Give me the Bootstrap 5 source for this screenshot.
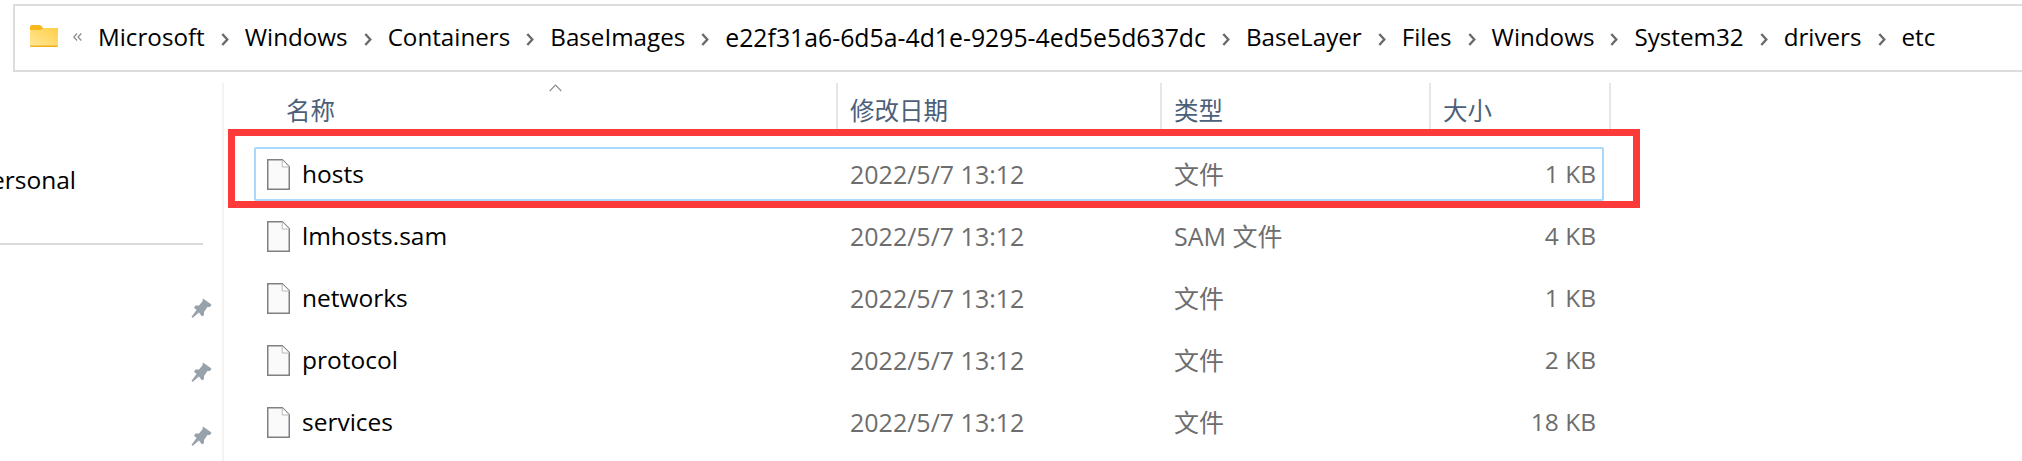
<!DOCTYPE html>
<html lang="zh">
<head>
<meta charset="utf-8">
<title>etc</title>
<link href="https://cdn.jsdelivr.net/npm/bootstrap@5.3.0/dist/css/bootstrap.min.css" rel="stylesheet">
<style>
html,body{height:461px;overflow:hidden;background:#fff}
body{font-family:"Open Sans","Noto Sans CJK SC",sans-serif;font-size:25px;color:#000}
.addr{margin:4px 0 0 13px;height:68px;border:2px solid #dcdcdc;border-right:0;padding-left:15px;padding-bottom:2px}
.addr .ic-folder{width:28px;height:22px;margin-top:-2px}
.addr .ic-back{width:9px;height:8px;margin-left:15px;margin-right:16px}
.crumb{white-space:nowrap;line-height:1;font-size:24.2px}
.crumb-long{font-size:24.8px}
.sep{width:8px;height:13px;margin:4px 16px 0}
.main{margin-top:11px}
.side{width:224px;height:378px;border-right:2px solid #f3f3f3;padding-top:79px;overflow:hidden}
.side-label{line-height:36px;height:36px;margin-left:-9px;font-size:24.500px}
.side-line{height:2px;background:#d9d9d9;width:203px;margin-top:45px;margin-bottom:53px}
.pins{gap:44px;padding-right:10px}
.pin{width:21px;height:20px}
.cols{height:46px;position:relative}
.hcol{color:#4c607a;font-size:24.500px;font-family:"Noto Sans CJK SC","Open Sans",sans-serif;border-right:2px solid #e6e6e6;padding-left:12px;padding-top:10px;line-height:34px;height:46px}
.c-name{width:614px;padding-left:62px}
.c-date{width:324px}
.c-type{width:269px}
.c-size{width:180px}
.caret{position:absolute;left:325px;top:1px;width:13px;height:8px}
.rows{margin:18px 0 0 30px;gap:8px}
.frow{width:1350px;height:54px;border:2px solid transparent;line-height:50px;position:relative}
.frow.sel{border-color:#a8d8fb;border-radius:2px}
.r-name{width:582px;padding-left:11px;gap:12px;font-size:24.500px}
.r-date{width:324px;padding-left:12px;color:#6d6d6d}
.r-type{width:269px;padding-left:12px;color:#6d6d6d}
.r-size{width:171px;padding-right:6px;text-align:right;color:#6d6d6d;font-size:24.500px}
.ic-file{width:23px;height:31px;flex:none}
.mark-box{left:-28px;top:-20px;width:1412px;height:79px;border:7px solid #fc3a3a;pointer-events:none}
</style>
</head>
<body>
<svg width="0" height="0" class="position-absolute">
<defs>
<symbol id="chev" viewBox="0 0 8 13"><path d="M1.3 1l5 5.500-5 5.500" fill="none" stroke="#6b6b6b" stroke-width="2.400"/></symbol>
<symbol id="file" viewBox="0 0 23 31"><path d="M.75.75h14.500l7 7v22.500H.75z" fill="#fafafa" stroke="#808080" stroke-width="1.500"/><path d="M15.200 1v7h7" fill="#fff" stroke="#b8b8b8" stroke-width="1"/></symbol>
<symbol id="pinic" viewBox="0 0 21 20"><path d="M12 .5L20.500 6.500 19 9h-2.500L13 14v3l-2 1.500-3-4L1.500 20 .5 18.700l5-6.700L3 9.500l1.500-2H8l3.500-4.300z" fill="#98a2aa"/></symbol>
</defs>
</svg>

<nav class="addr d-flex align-items-center">
  <svg class="ic-folder flex-shrink-0" viewBox="0 0 28 22">
    <defs><linearGradient id="fg" x1="0" y1="1" x2="1" y2="0"><stop offset="0" stop-color="#ffe79a"/><stop offset="1" stop-color="#ffcf48"/></linearGradient></defs>
    <path d="M0 2a2 2 0 0 1 2-2h7c2 0 3 1.500 4 3h15v3H0z" fill="#f8b81c"/>
    <path d="M0 5h10c1.500 0 2.500-2 4-2h12.500a1.500 1.500 0 0 1 1.500 1.500V20.500a1.500 1.500 0 0 1-1.500 1.500H1.500A1.500 1.500 0 0 1 0 20.500z" fill="url(#fg)"/>
    <path d="M0 20.500h28a1.500 1.500 0 0 1-1.500 1.500H1.500A1.500 1.500 0 0 1 0 20.500z" fill="#f2b01c"/>
  </svg>
  <svg class="ic-back flex-shrink-0" viewBox="0 0 9 8"><path d="M4 .5L.8 4 4 7.500M8.300.5L5 4l3.300 3.500" fill="none" stroke="#8a8a8a" stroke-width="1.200"/></svg>
  <span class="crumb">Microsoft</span><svg class="sep flex-shrink-0"><use href="#chev"/></svg>
  <span class="crumb">Windows</span><svg class="sep flex-shrink-0"><use href="#chev"/></svg>
  <span class="crumb">Containers</span><svg class="sep flex-shrink-0"><use href="#chev"/></svg>
  <span class="crumb">BaseImages</span><svg class="sep flex-shrink-0"><use href="#chev"/></svg>
  <span class="crumb crumb-long">e22f31a6-6d5a-4d1e-9295-4ed5e5d637dc</span><svg class="sep flex-shrink-0"><use href="#chev"/></svg>
  <span class="crumb">BaseLayer</span><svg class="sep flex-shrink-0"><use href="#chev"/></svg>
  <span class="crumb">Files</span><svg class="sep flex-shrink-0"><use href="#chev"/></svg>
  <span class="crumb">Windows</span><svg class="sep flex-shrink-0"><use href="#chev"/></svg>
  <span class="crumb">System32</span><svg class="sep flex-shrink-0"><use href="#chev"/></svg>
  <span class="crumb">drivers</span><svg class="sep flex-shrink-0"><use href="#chev"/></svg>
  <span class="crumb">etc</span>
</nav>

<div class="main d-flex">
  <aside class="side flex-shrink-0">
    <div class="side-label">ersonal</div>
    <div class="side-line"></div>
    <div class="pins d-flex flex-column align-items-end">
      <svg class="pin"><use href="#pinic"/></svg>
      <svg class="pin"><use href="#pinic"/></svg>
      <svg class="pin"><use href="#pinic"/></svg>
    </div>
  </aside>
  <section class="flex-grow-1">
    <div class="cols d-flex">
      <div class="hcol c-name">名称</div>
      <div class="hcol c-date">修改日期</div>
      <div class="hcol c-type">类型</div>
      <div class="hcol c-size">大小</div>
      <svg class="caret" viewBox="0 0 13 8"><path d="M.7 7L6.500 1l5.800 6" fill="none" stroke="#8c8c8c" stroke-width="1.100"/></svg>
    </div>
    <div class="rows d-flex flex-column">
      <div class="frow sel d-flex">
        <div class="r-name d-flex align-items-center"><svg class="ic-file"><use href="#file"/></svg><span>hosts</span></div>
        <div class="r-date">2022/5/7 13:12</div>
        <div class="r-type">文件</div>
        <div class="r-size">1 KB</div>
        <div class="mark-box position-absolute"></div>
      </div>
      <div class="frow d-flex">
        <div class="r-name d-flex align-items-center"><svg class="ic-file"><use href="#file"/></svg><span>lmhosts.sam</span></div>
        <div class="r-date">2022/5/7 13:12</div>
        <div class="r-type">SAM 文件</div>
        <div class="r-size">4 KB</div>
      </div>
      <div class="frow d-flex">
        <div class="r-name d-flex align-items-center"><svg class="ic-file"><use href="#file"/></svg><span>networks</span></div>
        <div class="r-date">2022/5/7 13:12</div>
        <div class="r-type">文件</div>
        <div class="r-size">1 KB</div>
      </div>
      <div class="frow d-flex">
        <div class="r-name d-flex align-items-center"><svg class="ic-file"><use href="#file"/></svg><span>protocol</span></div>
        <div class="r-date">2022/5/7 13:12</div>
        <div class="r-type">文件</div>
        <div class="r-size">2 KB</div>
      </div>
      <div class="frow d-flex">
        <div class="r-name d-flex align-items-center"><svg class="ic-file"><use href="#file"/></svg><span>services</span></div>
        <div class="r-date">2022/5/7 13:12</div>
        <div class="r-type">文件</div>
        <div class="r-size">18 KB</div>
      </div>
    </div>
  </section>
</div>
</body>
</html>
